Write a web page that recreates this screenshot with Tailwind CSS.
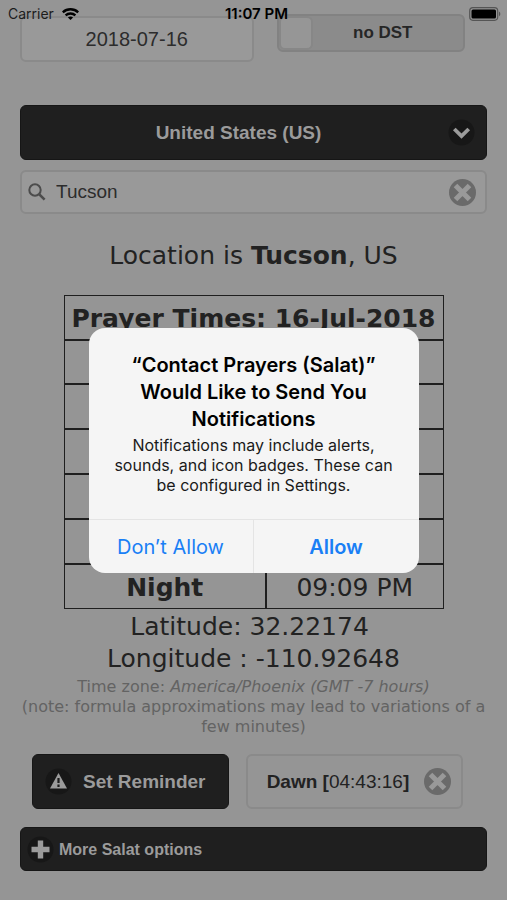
<!DOCTYPE html>
<html lang="en">
<head>
<meta charset="utf-8">
<meta name="viewport" content="width=device-width, initial-scale=1">
<title>Contact Prayers (Salat)</title>
<script src="https://cdn.jsdelivr.net/npm/@tailwindcss/browser@4"></script>
</head>
<body class="relative min-h-screen overflow-x-hidden bg-[#959595] font-['Liberation_Sans',Arial,sans-serif] text-[#222]">

<!-- Status bar floats over the scrolled page -->
<header class="absolute inset-x-0 top-0 z-10 grid h-7 grid-cols-3 items-center pr-0.5 pl-2 font-['Inter',sans-serif] text-sm text-black">
  <div class="flex items-center gap-2 text-[#1c1c1c]">
    <span>Carrier</span>
    <svg class="h-3 w-[17px]" viewBox="0 0 17 12" fill="none" stroke="#000" stroke-width="2.4" aria-hidden="true">
      <path d="M.8 4.300C5.200.3 11.800.3 16.200 4.300"/>
      <path d="M3.600 7.400c2.700-2.500 7.100-2.500 9.800 0"/>
      <path d="M8.500 12 5.900 9.500c1.500-1.300 3.700-1.300 5.200 0z" fill="#000" stroke="none"/>
    </svg>
  </div>
  <div class="text-center text-[15px] font-semibold whitespace-nowrap">11:07 PM</div>
  <svg class="mr-1 h-[14px] w-8 justify-self-end" viewBox="0 0 32 14" aria-hidden="true">
    <rect x=".7" y=".7" width="28" height="12.600" rx="3.200" fill="none" stroke="#555" stroke-width="1.200"/>
    <rect x="2.500" y="2.500" width="24.500" height="9" rx="1.500" fill="#000"/>
    <path d="M30 4.600c1.800.8 1.800 4 0 4.800z" fill="#555"/>
  </svg>
</header>

<main class="px-5">
  <div class="flex items-start pt-[14px]">
    <input type="text" aria-label="Date" value="2018-07-16" class="mt-0.5 h-[46px] w-1/2 min-w-0 rounded-md border-2 border-[#8a8a8a] bg-[#999] text-center text-xl text-[#2c2c2c]">
    <label class="relative mr-[22px] ml-[23px] flex h-[38px] flex-1 items-center justify-center rounded-md border-2 border-[#828282] bg-[#8b8b8b] pl-6 text-[17px] font-bold text-[#262626]">
      <input type="checkbox" class="absolute top-0 left-0 h-[34px] w-[34px] appearance-none rounded-md border-2 border-[#878787] bg-[#969696]">
      no DST
    </label>
  </div>

  <div class="relative mt-[43px]">
    <select aria-label="Country" class="h-[55px] w-full appearance-none rounded-md border border-[#161616] bg-[#1f1f1f] pt-0.5 pr-[30px] text-center text-[19px] font-bold text-[#9b9b9b] [text-align-last:center]">
      <option>United States (US)</option>
    </select>
    <svg class="pointer-events-none absolute top-[14px] right-3 size-[27px]" viewBox="0 0 27 27" aria-hidden="true">
      <circle cx="13.500" cy="13.500" r="13" fill="#171717"/>
      <path d="M6.300 10l7.200 7 7.200-7" fill="none" stroke="#9b9b9b" stroke-width="3.800"/>
    </svg>
  </div>

  <div class="mt-[10px] flex h-11 items-center rounded-md border-2 border-[#8a8a8a] bg-[#999] pr-[9px] pl-[6px]">
    <svg class="size-[18px] shrink-0" viewBox="0 0 18 18" fill="none" stroke="#4c4c4c" aria-hidden="true">
      <circle cx="7" cy="7" r="5.700" stroke-width="2"/>
      <path d="M11.300 11.300l5.300 5.300" stroke-width="2.600"/>
    </svg>
    <input type="text" aria-label="City" value="Tucson" class="ml-[10px] min-w-0 flex-1 bg-transparent text-[19px] text-[#2c2c2c] outline-none">
    <button type="button" aria-label="Clear city">
      <svg class="size-[27px]" viewBox="0 0 27 27" aria-hidden="true">
        <circle cx="13.500" cy="13.500" r="13.500" fill="#6a6a6a"/>
        <path d="M6.500 6.500l14 14M20.500 6.500l-14 14" stroke="#999" stroke-width="5"/>
      </svg>
    </button>
  </div>

  <section class="text-center font-['DejaVu_Sans',Verdana,sans-serif] text-[25px] leading-8">
    <p class="mt-[26px]">Location is <b>Tucson</b>, US</p>
    <table class="mx-auto mt-[23px] mb-0.5 h-[314px] w-[380px] table-fixed border-collapse">
      <colgroup><col class="w-[202px]"><col></colgroup>
      <thead>
        <tr class="h-11"><th colspan="2" class="border border-b-2 border-[#1f1f1f] p-0 pt-1 font-bold whitespace-nowrap">Prayer Times: 16-Jul-2018</th></tr>
      </thead>
      <tbody>
        <tr class="h-11"><th class="border border-b-2 border-[#1f1f1f] p-0"></th><td class="border border-b-2 border-l-2 border-[#1f1f1f] p-0"></td></tr>
        <tr class="h-11"><th class="border border-b-2 border-[#1f1f1f] p-0"></th><td class="border border-b-2 border-l-2 border-[#1f1f1f] p-0"></td></tr>
        <tr class="h-11"><th class="border border-b-2 border-[#1f1f1f] p-0"></th><td class="border border-b-2 border-l-2 border-[#1f1f1f] p-0"></td></tr>
        <tr class="h-11"><th class="border border-b-2 border-[#1f1f1f] p-0"></th><td class="border border-b-2 border-l-2 border-[#1f1f1f] p-0"></td></tr>
        <tr class="h-11"><th class="border border-b-2 border-[#1f1f1f] p-0"></th><td class="border border-b-2 border-l-2 border-[#1f1f1f] p-0"></td></tr>
        <tr class="h-11"><th class="border border-[#1f1f1f] p-0 pt-1">Night</th><td class="border border-l-2 border-[#1f1f1f] p-0 pt-1">09:09 PM</td></tr>
      </tbody>
    </table>
    <p>Latitude: 32.22174&nbsp;</p>
    <p>Longitude : -110.92648</p>
    <p class="mt-0.5 text-base leading-5 text-[#636363]">Time zone: <i>America/Phoenix (GMT -7 hours)</i><br>(note: formula approximations may lead to variations of a few minutes)</p>
  </section>

  <div class="mt-[17px] grid grid-cols-[19fr_21fr] gap-[17px] pr-6 pl-3 text-[19px]">
    <button type="button" class="flex h-[55px] items-center gap-[11px] rounded-md border border-[#161616] bg-[#1f1f1f] pl-3 font-bold whitespace-nowrap text-[#9b9b9b]">
      <svg class="size-[27px]" viewBox="0 0 27 27" aria-hidden="true">
        <circle cx="13.500" cy="13.500" r="13" fill="#171717"/>
        <path d="M13.500 5L22 20.500H5z" fill="#9b9b9b"/>
        <path d="M13.500 10v5M13.500 16.500v2.400" stroke="#1b1b1b" stroke-width="2.200"/>
      </svg>
      <span class="pt-0.5">Set Reminder</span>
    </button>
    <button type="button" class="flex h-[55px] items-center justify-between rounded-md border-2 border-[#8a8a8a] bg-[#959595] pr-[10px] pl-[19px] whitespace-nowrap">
      <span class="pt-0.5"><b>Dawn [</b>04:43:16<b>]</b></span>
      <svg class="size-[27px]" viewBox="0 0 27 27" aria-hidden="true">
        <circle cx="13.500" cy="13.500" r="13.500" fill="#6a6a6a"/>
        <path d="M6.500 6.500l14 14M20.500 6.500l-14 14" stroke="#999" stroke-width="5"/>
      </svg>
    </button>
  </div>

  <button type="button" class="mt-[18px] flex h-11 w-full items-center gap-[5px] rounded-md border border-[#161616] bg-[#1f1f1f] pl-[6px] text-base font-bold text-[#9b9b9b]">
    <svg class="size-[27px]" viewBox="0 0 27 27" aria-hidden="true">
      <circle cx="13.500" cy="13.500" r="13" fill="#171717"/>
      <path d="M4.500 13.500h18M13.500 4.500v18" stroke="#9b9b9b" stroke-width="5.400"/>
    </svg>
    <span class="pt-0.5">More Salat options</span>
  </button>
</main>

<!-- Permission alert -->
<div class="absolute inset-0 z-20 flex items-center justify-center pt-px">
  <div role="alertdialog" aria-labelledby="alert-title" aria-describedby="alert-text" class="w-[330px] overflow-hidden rounded-2xl bg-[#f5f5f5] text-center font-['Inter',sans-serif] text-black">
    <div class="px-6 pt-6 pb-6">
      <h1 id="alert-title" class="text-xl leading-[27px] font-semibold">“Contact Prayers (Salat)” Would Like to Send You Notifications</h1>
      <p id="alert-text" class="mt-0.5 text-base leading-5 text-[#1a1a1a]">Notifications may include alerts, sounds, and icon badges. These can be configured in Settings.</p>
    </div>
    <div class="grid h-[54px] grid-cols-2 border-t border-[#e4e4e4] text-xl text-[#1a7ff5]">
      <button type="button" class="border-r border-[#e4e4e4]">Don’t Allow</button>
      <button type="button" class="font-semibold">Allow</button>
    </div>
  </div>
</div>
</body>
</html>
